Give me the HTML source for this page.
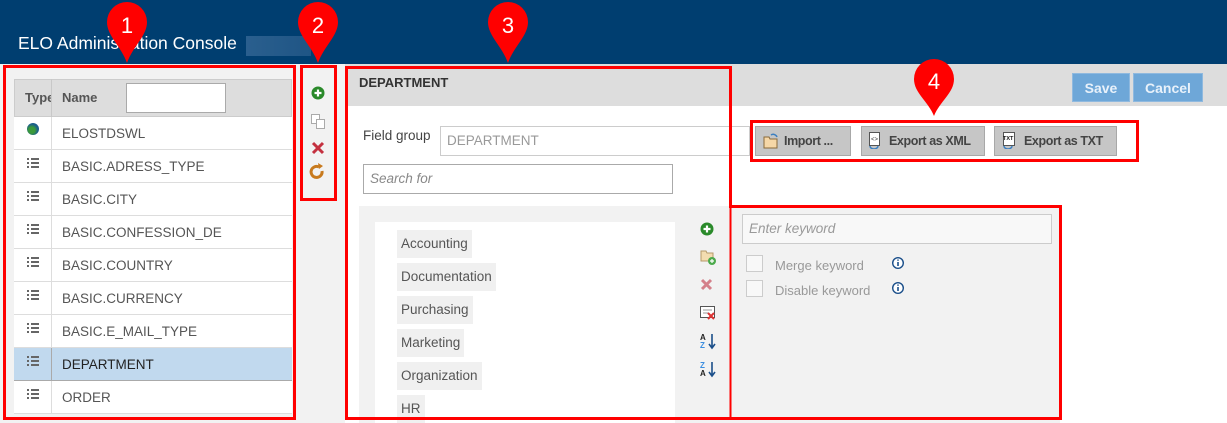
<!DOCTYPE html>
<html><head><meta charset="utf-8"><style>
*{margin:0;padding:0;box-sizing:border-box}
body{width:1227px;height:423px;overflow:hidden;background:#fff;font-family:"Liberation Sans",sans-serif;position:relative;color:#444}
.a{position:absolute}
.hdr{left:0;top:0;width:1227px;height:64px;background:#003e70}
.title{left:18px;top:33px;color:#fff;font-size:17.5px}
.rb{position:absolute;border:3px solid #f00}
.row{position:absolute;left:14px;width:278px;height:33px;border-bottom:1px solid #ddd;background:#fff;font-size:13.5px;color:#555}
.row .n{position:absolute;left:48px;top:9px}
.row .d{position:absolute;left:37px;top:0;width:1px;height:33px;background:#ddd}
.row .ic{position:absolute;left:13px;top:8px;width:12px;height:10px;background:
linear-gradient(#666,#666) 0 0/2px 2px no-repeat,linear-gradient(#666,#666) 4px 0/8px 2px no-repeat,
linear-gradient(#666,#666) 0 4px/2px 2px no-repeat,linear-gradient(#666,#666) 4px 4px/8px 2px no-repeat,
linear-gradient(#666,#666) 0 8px/2px 2px no-repeat,linear-gradient(#666,#666) 4px 8px/8px 2px no-repeat}
.tag{position:absolute;left:397px;height:28px;background:#f0f0f0;font-size:13.5px;padding:6px 4px;color:#555}
.btn{position:absolute;top:126px;height:30px;background:#c6c6c6;border:1px solid #a8a8a8;font-size:12.5px;letter-spacing:-0.4px;color:#444;white-space:nowrap;font-weight:bold}
.btn span{position:absolute;top:7px}
</style></head><body>
<div class="a hdr"></div>
<div class="a title">ELO Administration Console</div>
<div class="a" style="left:246px;top:36px;width:65px;height:20px;background:linear-gradient(90deg,#2a5f8e,#1f5585)"></div>
<div class="a" style="left:0;top:64px;width:345px;height:359px;background:#f2f2f2"></div>
<div class="a" style="left:345px;top:64px;width:882px;height:42px;background:#ddd"></div>
<div class="a" style="left:359px;top:75px;font-size:13px;font-weight:bold;color:#333">DEPARTMENT</div>
<div class="a" style="left:1072px;top:73px;width:58px;height:29px;background:#6ea7d8;border:1px solid #8fb9df;color:#e8f1fa;font-weight:bold;font-size:14px;text-align:center;padding-top:6px">Save</div>
<div class="a" style="left:1133px;top:73px;width:70px;height:29px;background:#6ea7d8;border:1px solid #8fb9df;color:#e8f1fa;font-weight:bold;font-size:14px;text-align:center;padding-top:6px">Cancel</div>

<div class="a" style="left:14px;top:79px;width:278px;height:38px;background:#ddd;border:1px solid #ccc"></div>
<div class="a" style="left:51px;top:79px;width:1px;height:38px;background:#c8c8c8"></div>
<div class="a" style="left:25px;top:90px;font-size:13px;font-weight:bold;color:#555;width:26px;overflow:hidden;white-space:nowrap">Type</div>
<div class="a" style="left:62px;top:90px;font-size:13px;font-weight:bold;color:#555">Name</div>
<div class="a" style="left:126px;top:83px;width:100px;height:30px;background:#fff;border:1px solid #aaa"></div>
<div class="row" style="top:117px"><div class="d"></div><div class="a" style="left:13px;top:6px;width:12px;height:12px;border-radius:50%;background:radial-gradient(circle at 40% 60%,#3a9a3a 30%,#1b5e8c 60%)"></div><div class="n">ELOSTDSWL</div></div>
<div class="row" style="top:150px"><div class="d"></div><div class="ic"></div><div class="n">BASIC.ADRESS_TYPE</div></div>
<div class="row" style="top:183px"><div class="d"></div><div class="ic"></div><div class="n">BASIC.CITY</div></div>
<div class="row" style="top:216px"><div class="d"></div><div class="ic"></div><div class="n">BASIC.CONFESSION_DE</div></div>
<div class="row" style="top:249px"><div class="d"></div><div class="ic"></div><div class="n">BASIC.COUNTRY</div></div>
<div class="row" style="top:282px"><div class="d"></div><div class="ic"></div><div class="n">BASIC.CURRENCY</div></div>
<div class="row" style="top:315px"><div class="d"></div><div class="ic"></div><div class="n">BASIC.E_MAIL_TYPE</div></div>
<div class="row" style="top:348px;background:#c1d9ee;border-bottom:1px solid #aaa"><div class="d" style="background:#aaa"></div><div class="ic"></div><div class="n" style="color:#222">DEPARTMENT</div></div>
<div class="row" style="top:381px"><div class="d"></div><div class="ic"></div><div class="n">ORDER</div></div>

<svg class="a" style="left:309px;top:84px" width="20" height="110">
<circle cx="9" cy="9" r="6.5" fill="#2a8a2a"/><path d="M9 5.5v7M5.5 9h7" stroke="#fff" stroke-width="2.2"/>
<rect x="2.5" y="30.5" width="8" height="9" fill="#fff" stroke="#aaa"/><rect x="7.5" y="35.5" width="8" height="9" fill="#fff" stroke="#aaa"/>
<path d="M4 59l10 10M14 59l-10 10" stroke="#c4303f" stroke-width="3"/>
<path d="M13 87a5.5 5.5 0 1 1-3-4" fill="none" stroke="#c87a1e" stroke-width="3"/><path d="M9 79l5 3-4 3z" fill="#c87a1e"/>
</svg>

<div class="a" style="left:363px;top:128px;font-size:13.5px;color:#444">Field group</div>
<div class="a" style="left:440px;top:126px;width:310px;height:30px;border:1px solid #ccc;font-size:13.5px;color:#999;padding:6px 6px">DEPARTMENT</div>
<div class="a" style="left:363px;top:164px;width:310px;height:30px;border:1px solid #aaa;font-size:13.5px;color:#888;font-style:italic;padding:6px 6px">Search for</div>
<div class="a" style="left:359px;top:206px;width:701px;height:217px;background:#f2f2f2"></div>
<div class="a" style="left:375px;top:222px;width:300px;height:201px;background:#fff"></div>
<div class="tag" style="top:230px">Accounting</div>
<div class="tag" style="top:263px">Documentation</div>
<div class="tag" style="top:296px">Purchasing</div>
<div class="tag" style="top:329px">Marketing</div>
<div class="tag" style="top:362px">Organization</div>
<div class="tag" style="top:395px">HR</div>
<svg class="a" style="left:698px;top:220px" width="20" height="162">
<circle cx="9" cy="9" r="6.5" fill="#2a8a2a"/><path d="M9 5.5v7M5.5 9h7" stroke="#fff" stroke-width="2.2"/>
<path d="M3 31h5l1 2h6v8H3z" fill="#f3dcb0" stroke="#b59a6a"/><circle cx="14" cy="41" r="4" fill="#4caa4c"/><path d="M14 39v4M12 41h4" stroke="#fff" stroke-width="1.2"/>
<path d="M4 60l9 9M13 60l-9 9" stroke="#d4808a" stroke-width="3"/>
<rect x="2.5" y="86.5" width="14" height="11" fill="#fff" stroke="#555"/><path d="M5 90h9M5 93h6" stroke="#999"/><path d="M10 93l6 6M16 93l-6 6" stroke="#d33" stroke-width="2"/>
<text x="2" y="120" font-size="8" font-weight="bold" fill="#222" font-family="Liberation Sans">A</text><text x="2" y="128" font-size="8" font-weight="bold" fill="#3c8ee0" font-family="Liberation Sans">Z</text><path d="M14 114v13M11 124l3 4 3-4" stroke="#1b4f8a" stroke-width="1.6" fill="none"/>
<text x="2" y="148" font-size="8" font-weight="bold" fill="#3c8ee0" font-family="Liberation Sans">Z</text><text x="2" y="156" font-size="8" font-weight="bold" fill="#222" font-family="Liberation Sans">A</text><path d="M14 142v13M11 152l3 4 3-4" stroke="#1b4f8a" stroke-width="1.6" fill="none"/>
</svg>
<div class="a" style="left:742px;top:214px;width:310px;height:30px;border:1px solid #ccc;background:#f8f8f8;font-size:13.5px;color:#999;font-style:italic;padding:6px 6px">Enter keyword</div>
<div class="a" style="left:746px;top:255px;width:17px;height:17px;border:1px solid #ccc;background:#f8f8f8"></div>
<div class="a" style="left:746px;top:280px;width:17px;height:17px;border:1px solid #ccc;background:#f8f8f8"></div>
<div class="a" style="left:775px;top:258px;font-size:13px;color:#999">Merge keyword</div>
<div class="a" style="left:775px;top:283px;font-size:13px;color:#999">Disable keyword</div>
<svg class="a" style="left:891px;top:256px" width="14" height="40"><circle cx="7" cy="7" r="5.3" fill="#fff" stroke="#1b4f8a" stroke-width="1.4"/><path d="M7 6v4M7 3.5v1.3" stroke="#1b4f8a" stroke-width="1.6"/><circle cx="7" cy="32" r="5.3" fill="#fff" stroke="#1b4f8a" stroke-width="1.4"/><path d="M7 31v4M7 28.5v1.3" stroke="#1b4f8a" stroke-width="1.6"/></svg>

<div class="btn" style="left:755px;width:96px"><span style="left:28px">Import ...</span></div>
<div class="btn" style="left:861px;width:124px"><span style="left:27px">Export as XML</span></div>
<div class="btn" style="left:994px;width:123px"><span style="left:29px">Export as TXT</span></div>
<svg class="a" style="left:763px;top:132px" width="16" height="18"><path d="M1 5h5l1 2h7v9H1z" fill="#f6d7a7" stroke="#8a6a3a"/><path d="M8 3a4 4 0 0 1 6 2" stroke="#3c7fc0" fill="none" stroke-width="1.5"/></svg>
<svg class="a" style="left:867px;top:131px" width="16" height="18"><rect x="2.5" y="1.5" width="10" height="13" fill="#fff" stroke="#555"/><text x="4" y="10" font-size="6" fill="#333" font-family="Liberation Sans">&lt;&gt;</text><path d="M3 15a4 3 0 0 0 8 0" stroke="#3c7fc0" fill="none" stroke-width="1.5"/></svg>
<svg class="a" style="left:1001px;top:131px" width="18" height="18"><rect x="2.5" y="1.5" width="11" height="13" fill="#fff" stroke="#555"/><text x="2" y="9" font-size="5.5" font-weight="bold" fill="#111" font-family="Liberation Sans">TXT</text><path d="M3 15a4 3 0 0 0 8 0" stroke="#3c7fc0" fill="none" stroke-width="1.5"/></svg>

<div class="rb" style="left:3px;top:65px;width:293px;height:355px"></div>
<div class="rb" style="left:300px;top:65px;width:37px;height:136px"></div>
<svg class="a" style="left:0;top:0" width="1227" height="423"><path d="M346.5 67.5H730.5V206.5H1060.5V418.5H346.5Z" fill="none" stroke="#f00" stroke-width="3"/><path d="M730.5 206V418" stroke="#f00" stroke-width="2"/></svg>
<div class="rb" style="left:750px;top:120px;width:389px;height:42px"></div>

<svg class="a" style="left:0;top:0" width="1227" height="130">
<g fill="#f00"><path d="M107 22a20 20 0 0 1 40 0c0 14-14 24-20 41c-6-17-20-27-20-41z"/>
<path d="M298 22a20 20 0 0 1 40 0c0 14-14 24-20 41c-6-17-20-27-20-41z"/>
<path d="M488 22a20 20 0 0 1 40 0c0 14-14 24-20 41c-6-17-20-27-20-41z"/>
<path d="M914 79a20 20 0 0 1 40 0c0 14-14 22-20 37c-6-15-20-23-20-37z"/></g>
<g fill="#fff" font-family="Liberation Sans" font-size="22" text-anchor="middle"><text x="127" y="33">1</text><text x="318" y="33">2</text><text x="508" y="33">3</text><text x="934" y="89">4</text></g>
</svg>
</body></html>
